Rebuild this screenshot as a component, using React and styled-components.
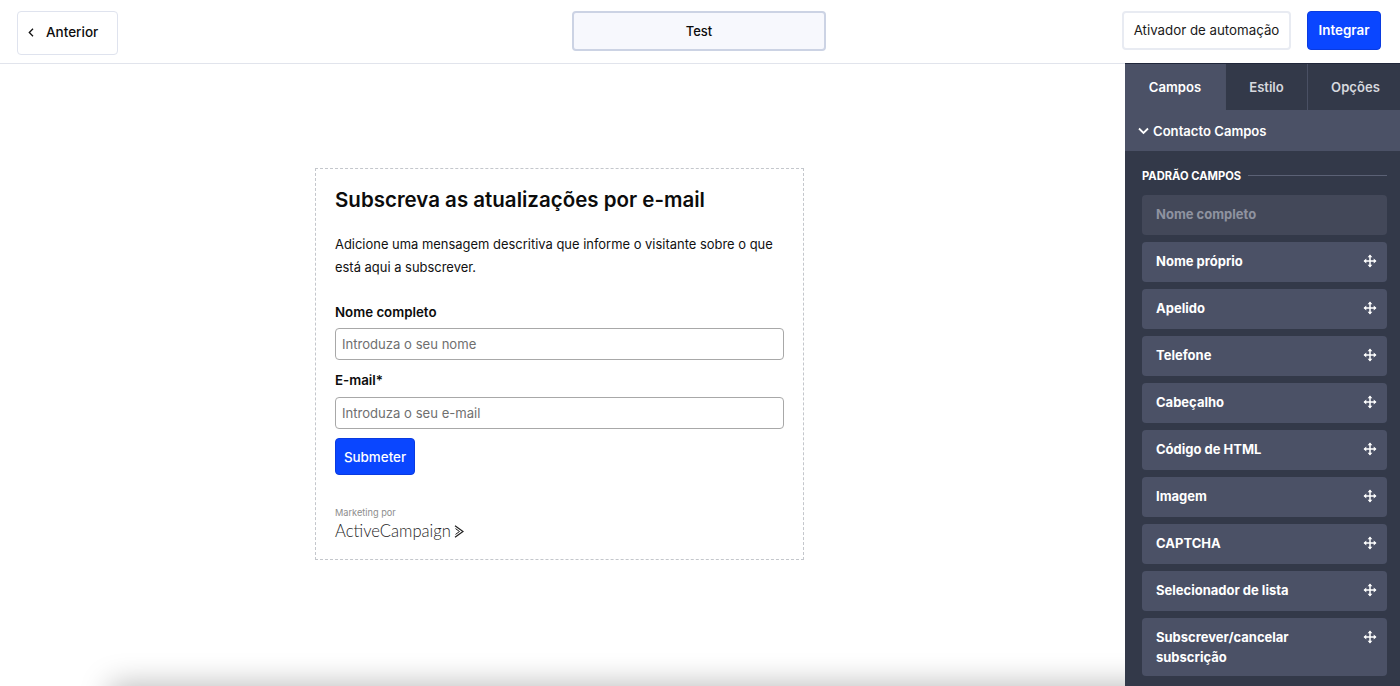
import React from "react";
import styled, { createGlobalStyle } from "styled-components";

const Global = createGlobalStyle`
  html, body { margin: 0; padding: 0; background: #fff; }
  * { box-sizing: border-box; }
  body { font-family: "Inter", "Liberation Sans", sans-serif; color: #0c0c0c; }
`;

const Page = styled.div`
  width: 1400px;
  height: 686px;
  display: flex;
  flex-direction: column;
  overflow: hidden;
`;

const TopBar = styled.header`
  height: 64px;
  flex: none;
  display: grid;
  grid-template-columns: 1fr 254px 1fr;
  align-items: start;
  padding: 11px 19px 0 17px;
  border-bottom: 1px solid #e1e4ec;
`;

const BackButton = styled.button`
  width: 101px;
  height: 44px;
  display: flex;
  align-items: center;
  gap: 12px;
  padding: 0 0 2px 10px;
  background: #fff;
  border: 1px solid #dfe3ee;
  border-radius: 4px;
  font: 500 13.5px "Inter", sans-serif;
  color: #0c0c0c;
`;

const TitleBox = styled.div`
  height: 40px;
  display: flex;
  align-items: center;
  justify-content: center;
  background: #f7f8fd;
  border: 2px solid #ccd3e4;
  border-radius: 4px;
  font-size: 13px;
  font-weight: 500;
`;

const Actions = styled.div`
  display: flex;
  justify-content: flex-end;
  gap: 16px;
`;

const GhostButton = styled.button`
  width: 169px;
  height: 39px;
  padding: 0 0 2px;
  background: #fff;
  border: 2px solid #e8ebf2;
  border-radius: 4px;
  font: 400 13.3px "Inter", sans-serif;
  color: #1a1a1a;
  white-space: nowrap;
`;

const PrimaryButton = styled.button`
  width: 74px;
  height: 39px;
  padding: 0 0 2px;
  background: #0a46ff;
  border: 1px solid #0a3be0;
  border-radius: 4px;
  font: 600 13.4px "Inter", sans-serif;
  color: #fff;
`;

const Body = styled.div`
  flex: 1;
  display: flex;
  min-height: 0;
`;

const Canvas = styled.main`
  position: relative;
  flex: 1;
  overflow: hidden;
  padding: 104px 0 0 315px;
`;

const BottomShadow = styled.div`
  position: absolute;
  left: 112px;
  right: -60px;
  top: 622px;
  height: 40px;
  box-shadow: 0 0 30px 2px rgba(0, 0, 0, 0.27);
`;

const FormCard = styled.section`
  width: 489px;
  height: 392px;
  padding: 17px 19px 0;
  border: 1px dashed #c4c7cc;
`;

const FormTitle = styled.h1`
  margin: 0 0 19px;
  font-size: 20.5px;
  line-height: 28px;
  font-weight: 600;
  color: #0c0c0c;
`;

const FormText = styled.p`
  margin: 0 0 23px;
  font-size: 12.95px;
  line-height: 22.5px;
  color: #111;
`;

const FieldLabel = styled.label`
  display: block;
  margin-bottom: ${p => p.$gap}px;
  font-size: 13.3px;
  line-height: 22px;
  font-weight: 600;
`;

const TextInput = styled.input`
  display: block;
  width: 449px;
  height: 32px;
  margin-bottom: 9px;
  padding: 0 6px;
  border: 1px solid #a8a8a8;
  border-radius: 4px;
  background: #fff;
  font: 400 13.1px "Inter", sans-serif;
  &::placeholder { color: #6f6f6f; opacity: 1; }
`;

const SubmitButton = styled.button`
  display: block;
  width: 80px;
  height: 37px;
  margin-top: 9px;
  padding: 0;
  background: #0a46ff;
  border: 1px solid #0a3be0;
  border-radius: 4px;
  color: #fff;
  font: 500 13.4px "Inter", sans-serif;
`;

const Credit = styled.div`
  margin-top: 32px;
  font-size: 9.2px;
  line-height: 12px;
  color: #8d8d8d;
`;

const Brand = styled.div`
  display: flex;
  align-items: center;
  gap: 3px;
  margin-top: 2px;
  font-family: "Lato", sans-serif;
  font-size: 16.6px;
  line-height: 20px;
  font-weight: 300;
  color: #1e1e1e;
`;

const Sidebar = styled.aside`
  width: 275px;
  flex: none;
  margin-top: -1px;
  border-top: 1px solid #20263a;
  background: #333949;
  overflow: hidden;
`;

const Tabs = styled.nav`
  display: flex;
  height: 46px;
  gap: 1px;
  background: #4a5064;
`;

const Tab = styled.div`
  width: ${p => p.$width}px;
  padding-left: ${p => p.$inset || 0}px;
  display: flex;
  align-items: center;
  justify-content: center;
  font-size: 13.1px;
  font-weight: 600;
  background: ${p => (p.$active ? "#4b5166" : "#333949")};
  color: ${p => (p.$active ? "#fff" : "#d6d8de")};
`;

const GroupHeader = styled.div`
  height: 41px;
  display: flex;
  align-items: center;
  gap: 4px;
  padding: 1px 0 0 13px;
  background: #4b5166;
  color: #fff;
  font-size: 13.1px;
  font-weight: 600;
`;

const FieldList = styled.div`
  display: flex;
  flex-direction: column;
  gap: 7px;
  padding: 18px 13px 0 17px;
`;

const SectionRow = styled.div`
  display: flex;
  align-items: center;
  gap: 7px;
  height: 14px;
  margin-bottom: 5px;
  color: #fff;
  font-size: 11.2px;
  font-weight: 700;
  white-space: nowrap;
  &::after {
    content: "";
    flex: 1;
    height: 1px;
    margin-bottom: 1px;
    background: #5b6175;
  }
`;

const FieldItem = styled.div`
  display: flex;
  justify-content: space-between;
  align-items: flex-start;
  min-height: 40px;
  padding: 9px 10px 9px 14px;
  border-radius: 4px;
  background: ${p => (p.$disabled ? "#434859" : "#4b5166")};
  color: ${p => (p.$disabled ? "#8f93a0" : "#fff")};
  font-size: 13px;
  line-height: 20px;
  font-weight: 700;
`;

const ItemLabel = styled.span`
  max-width: 170px;
`;

const MoveSvg = styled.svg`
  width: 14px;
  height: 14px;
  margin-top: 3px;
`;

const MoveIcon = () => (
  <MoveSvg viewBox="0 0 14 14">
    <path d="M7 1.5v11M1.5 7h11" stroke="#fff" strokeWidth="1.5" />
    <path d="M7 .5l2.4 2.800H4.600zM7 13.500l2.400-2.800H4.600zM.5 7l2.800-2.400v4.800zM13.500 7l-2.800-2.400v4.800z" fill="#fff" />
  </MoveSvg>
);

const fields = [
  "Nome próprio",
  "Apelido",
  "Telefone",
  "Cabeçalho",
  "Código de HTML",
  "Imagem",
  "CAPTCHA",
  "Selecionador de lista",
  "Subscrever/cancelar subscrição",
];

export default function App() {
  return (
    <Page>
      <Global />
      <TopBar>
        <BackButton>
          <svg width="6" height="9" viewBox="0 0 6 9" fill="none">
            <path d="M5 .8 1.300 4.500 5 8.200" stroke="#111" strokeWidth="1.300" />
          </svg>
          Anterior
        </BackButton>
        <TitleBox>Test</TitleBox>
        <Actions>
          <GhostButton>Ativador de automação</GhostButton>
          <PrimaryButton>Integrar</PrimaryButton>
        </Actions>
      </TopBar>
      <Body>
        <Canvas>
          <FormCard>
            <FormTitle>Subscreva as atualizações por e-mail</FormTitle>
            <FormText>
              Adicione uma mensagem descritiva que informe o visitante sobre o que
              <br />
              está aqui a subscrever.
            </FormText>
            <FieldLabel $gap={5}>Nome completo</FieldLabel>
            <TextInput placeholder="Introduza o seu nome" />
            <FieldLabel $gap={6}>E-mail*</FieldLabel>
            <TextInput placeholder="Introduza o seu e-mail" />
            <SubmitButton>Submeter</SubmitButton>
            <Credit>Marketing por</Credit>
            <Brand>
              ActiveCampaign
              <svg width="10" height="13" viewBox="0 0 10 13" fill="none">
                <path d="M1 .8 9 6.500 1 12.200" stroke="#1e1e1e" strokeWidth="1.200" />
                <path d="M1.500 3.600 5.500 6.500 1.500 9.400" stroke="#1e1e1e" strokeWidth="1" />
              </svg>
            </Brand>
          </FormCard>
          <BottomShadow />
        </Canvas>
        <Sidebar>
          <Tabs>
            <Tab $width={100} $active>Campos</Tab>
            <Tab $width={81}>Estilo</Tab>
            <Tab $width={92} $inset={3}>Opções</Tab>
          </Tabs>
          <GroupHeader>
            <svg width="11" height="8" viewBox="0 0 11 8" fill="none">
              <path d="M1 1.500 5.500 6 10 1.500" stroke="#fff" strokeWidth="1.800" />
            </svg>
            Contacto Campos
          </GroupHeader>
          <FieldList>
            <SectionRow>PADRÃO CAMPOS</SectionRow>
            <FieldItem $disabled>Nome completo</FieldItem>
            {fields.map(name => (
              <FieldItem key={name}>
                <ItemLabel>{name}</ItemLabel>
                <MoveIcon />
              </FieldItem>
            ))}
          </FieldList>
        </Sidebar>
      </Body>
    </Page>
  );
}
